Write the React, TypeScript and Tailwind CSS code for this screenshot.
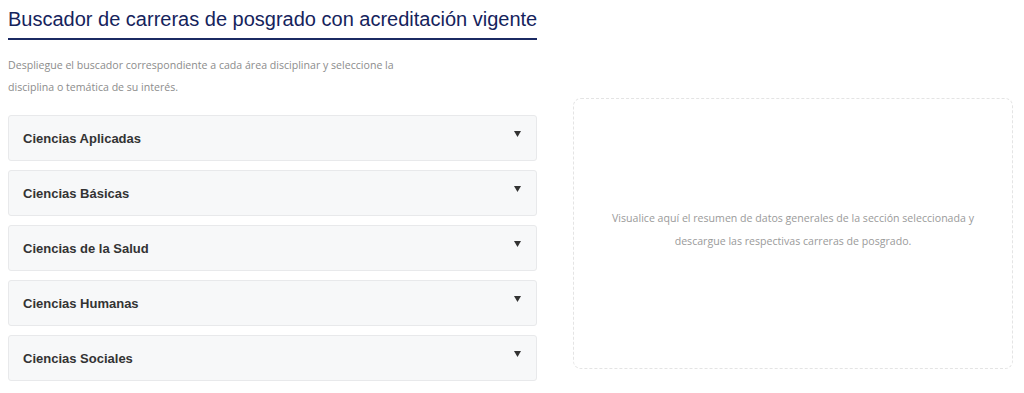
import React from 'react';

const AREAS = [
  'Ciencias Aplicadas',
  'Ciencias Básicas',
  'Ciencias de la Salud',
  'Ciencias Humanas',
  'Ciencias Sociales',
];

export default function App() {
  return (
    <div className="w-[1024px] h-[393px] bg-white overflow-hidden flex gap-[36px] pl-2 pr-[11px] font-['Open_Sans',sans-serif]">
      {/* Left column: title + accordion */}
      <div className="w-[529px] flex flex-col shrink-0">
        <h1 className="mt-[5px] text-[20px] leading-[28px] text-[#15235c] font-['Liberation_Sans',sans-serif] whitespace-nowrap">
          Buscador de carreras de posgrado con acreditación vigente
        </h1>
        <div className="mt-[5px] h-[2px] bg-[#1b2a63]" />
        <p className="mt-[14px] w-[404px] text-[10.6px] leading-[22px] text-[#8c8c8c]">
          Despliegue el buscador correspondiente a cada área disciplinar y seleccione la disciplina o temática de su interés.
        </p>
        <div className="mt-[17px] flex flex-col gap-[9px]">
          {AREAS.map((area) => (
            <div
              key={area}
              className="h-[46px] flex items-center justify-between pl-[14px] pr-[15px] bg-[#f7f8f9] border border-[#e8e9eb] rounded-[3px]"
            >
              <span className="mt-[1px] text-[13px] font-bold text-[#333] font-['Liberation_Sans',sans-serif]">
                {area}
              </span>
              <svg className="self-start mt-[15px]" width="7" height="6" viewBox="0 0 7 6">
                <path d="M0 0 H7 L3.5 6 Z" fill="#333" />
              </svg>
            </div>
          ))}
        </div>
      </div>

      {/* Right column: summary panel */}
      <div className="flex-1 mt-[98px] h-[271px] pb-[8px] border border-dashed border-[#e4e4e4] rounded-[8px] flex items-center justify-center">
        <p className="text-center text-[10.6px] leading-[23px] text-[#9a9a9a] whitespace-nowrap">
          Visualice aquí el resumen de datos generales de la sección seleccionada y
          <br />
          descargue las respectivas carreras de posgrado.
        </p>
      </div>
    </div>
  );
}
